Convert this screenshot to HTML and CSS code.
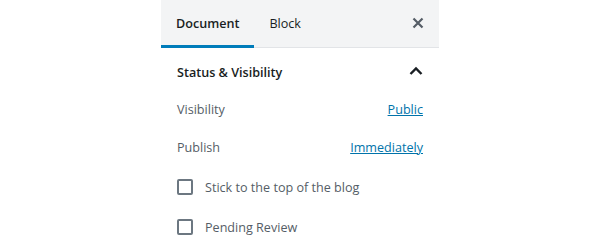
FILE: index.html
```html
<!DOCTYPE html>
<html>
<head>
<meta charset="utf-8">
<link rel="stylesheet" href="styles.css">
</head>
<body>
<div class="sidebar">
  <div class="header">
    <div class="tab active">Document</div>
    <div class="tab">Block</div>
    <div class="spacer"></div>
    <button class="close" aria-label="Close">
      <svg width="20" height="20" viewBox="0 0 20 20"><path d="M5.5 5.5 L14.5 14.5 M14.5 5.5 L5.5 14.5" stroke="#555d66" stroke-width="2.2" fill="none"/></svg>
    </button>
  </div>
  <div class="panel">
    <div class="panel-title">
      <span>Status &amp; Visibility</span>
      <svg width="14" height="10" viewBox="0 0 14 10"><polyline points="1.5,8 7,2.5 12.5,8" stroke="#191e23" stroke-width="2.4" fill="none"/></svg>
    </div>
    <div class="row"><span class="label">Visibility</span><a class="link">Public</a></div>
    <div class="row"><span class="label">Publish</span><a class="link">Immediately</a></div>
    <div class="row check"><span class="box"></span><span class="clabel">Stick to the top of the blog</span></div>
    <div class="row check"><span class="box"></span><span class="clabel">Pending Review</span></div>
  </div>
</div>
</body>
</html>
```
FILE: styles.css
```css
html, body {
  margin: 0;
  padding: 0;
  background: #fff;
}
body {
  font-family: "Segoe UI", "Open Sans", "Noto Sans", sans-serif;
  font-size: 12.6px;
  color: #191e23;
}
.sidebar {
  width: 278px;
  margin: 0 auto;
}
.header {
  display: flex;
  align-items: stretch;
  height: 48px;
  background: #f3f4f5;
  box-shadow: inset 0 -1px 0 #e2e4e7;
}
.tab {
  display: flex;
  align-items: center;
  padding: 0 15px 2px;
  color: #191e23;
}
.tab.active {
  font-weight: 600;
  box-shadow: inset 0 -3px 0 #007cba;
}
.spacer { flex: 1; }
.close {
  background: none;
  border: 0;
  padding: 0;
  margin: 0 11px 2px 0;
  width: 20px;
  display: flex;
  align-items: center;
  justify-content: center;
}
.panel {
  padding: 0 16px;
}
.panel-title {
  height: 48px;
  display: flex;
  align-items: center;
  justify-content: space-between;
  font-weight: 600;
}
.panel-title svg { margin-top: -2px; }
.row {
  display: flex;
  align-items: center;
  justify-content: space-between;
  height: 24px;
  margin-top: 14px;
}
.row:nth-child(2) { margin-top: 1px; }
.row.check {
  justify-content: flex-start;
  margin-top: 16px;
}
.label { color: #555d66; }
.link {
  color: #0073aa;
  text-decoration: underline;
}
.box {
  width: 16px;
  height: 16px;
  box-sizing: border-box;
  border: 2px solid #6c7781;
  border-radius: 2px;
  margin-right: 12px;
}
.clabel { color: #555d66; }
```
